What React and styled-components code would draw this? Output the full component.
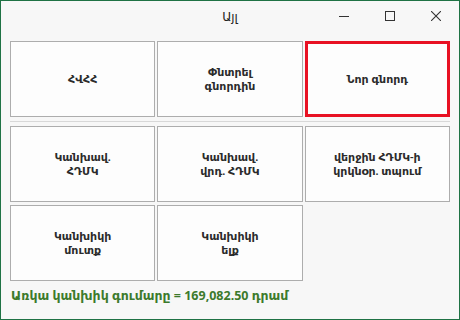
import React from "react";
import styled, { createGlobalStyle } from "styled-components";

const GlobalStyle = createGlobalStyle`
    html, body {
        margin: 0;
        padding: 0;
        background: #f7f7f7;
    }
`;

const Window = styled.div`
    width: 460px;
    height: 320px;
    box-sizing: border-box;
    border: 1px solid #1f7244;
    background: #f7f7f7;
    display: flex;
    flex-direction: column;
    font-family: "Noto Sans", "DejaVu Sans", sans-serif;
`;

const TitleBar = styled.div`
    height: 30px;
    display: flex;
    align-items: center;
    position: relative;
`;

const Title = styled.div`
    flex: 1;
    text-align: center;
    font-size: 12px;
    color: #222;
`;

const Controls = styled.div`
    position: absolute;
    right: 0;
    top: 0;
    height: 30px;
    display: flex;
`;

const ControlButton = styled.div`
    width: 46px;
    height: 30px;
    display: flex;
    align-items: center;
    justify-content: center;
    color: #333;
`;

const Content = styled.div`
    flex: 1;
    padding: 10px 9px 0 9px;
    display: flex;
    flex-direction: column;
`;

const Grid = styled.div`
    display: grid;
    grid-template-columns: repeat(3, 1fr);
    grid-auto-rows: 76px;
    gap: 3px 2px;
`;

const Divider = styled.div`
    height: 1px;
    background: #d8d8d8;
    margin: 4px 0;
`;

const ActionButton = styled.button`
    box-sizing: border-box;
    background: #fdfdfd;
    border: ${(p) => (p.$active ? "3px solid #e81123" : "1px solid #adadad")};
    font-family: "Noto Sans", "DejaVu Sans", sans-serif;
    font-size: 11px;
    font-weight: 600;
    line-height: 14px;
    color: #2b2b2b;
    white-space: pre-line;
    text-align: center;
    padding: 0;
    margin: 0;
`;

const Footer = styled.div`
    margin-top: 6px;
    padding-left: 1px;
    font-size: 12.5px;
    font-weight: 700;
    color: #3c7a2c;
`;

const MinIcon = () => (
    <svg width="10" height="10" viewBox="0 0 10 10">
        <path d="M0 5.5H10" stroke="currentColor" strokeWidth="1" />
    </svg>
);

const MaxIcon = () => (
    <svg width="10" height="10" viewBox="0 0 10 10">
        <rect x="0.5" y="0.5" width="9" height="9" fill="none" stroke="currentColor" />
    </svg>
);

const CloseIcon = () => (
    <svg width="10" height="10" viewBox="0 0 10 10">
        <path d="M0 0L10 10M10 0L0 10" stroke="currentColor" strokeWidth="1.1" />
    </svg>
);

const topButtons = [
    { label: "ՀՎՀՀ" },
    { label: "Փնտրել\nգնորդին" },
    { label: "Նոր գնորդ", active: true },
];

const cashButtons = [
    { label: "Կանխավ.\nՀԴՄԿ" },
    { label: "Կանխավ.\nվրդ. ՀԴՄԿ" },
    { label: "վերջին ՀԴՄԿ-ի\nկրկնօր. տպում" },
    { label: "Կանխիկի\nմուտք" },
    { label: "Կանխիկի\nելք" },
];

export default function App() {
    return (
        <>
            <GlobalStyle />
            <Window>
                <TitleBar>
                    <Title>Այլ</Title>
                    <Controls>
                        <ControlButton><MinIcon /></ControlButton>
                        <ControlButton><MaxIcon /></ControlButton>
                        <ControlButton><CloseIcon /></ControlButton>
                    </Controls>
                </TitleBar>
                <Content>
                    <Grid>
                        {topButtons.map((b) => (
                            <ActionButton key={b.label} $active={b.active}>
                                {b.label}
                            </ActionButton>
                        ))}
                    </Grid>
                    <Divider />
                    <Grid>
                        {cashButtons.map((b) => (
                            <ActionButton key={b.label}>{b.label}</ActionButton>
                        ))}
                    </Grid>
                    <Footer>Առկա կանխիկ գումարը = 169,082.50 դրամ</Footer>
                </Content>
            </Window>
        </>
    );
}
